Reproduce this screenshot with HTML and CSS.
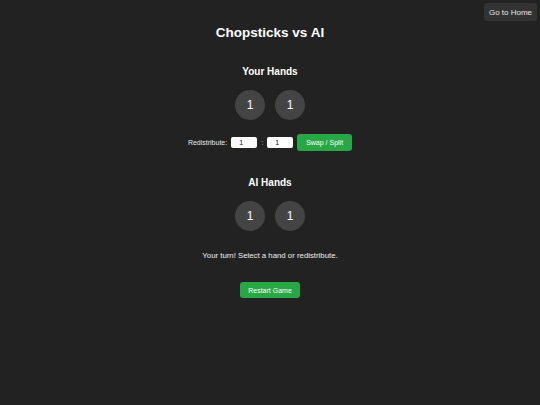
FILE: index.html
```html
<!DOCTYPE html>
<html lang="en">
<head>
<meta charset="utf-8">
<title>Chopsticks vs AI</title>
<link rel="stylesheet" href="styles.css">
</head>
<body>
<button class="home-btn">Go to Home</button>
<main class="game">
  <h1 class="title">Chopsticks vs AI</h1>
  <h2 class="section-title first">Your Hands</h2>
  <div class="hands">
    <div class="hand">1</div>
    <div class="hand">1</div>
  </div>
  <div class="redistribute">
    <span class="label">Redistribute:</span>
    <input class="num" type="text" value="1">
    <span class="colon">:</span>
    <input class="num" type="text" value="1">
    <button class="btn">Swap / Split</button>
  </div>
  <h2 class="section-title">AI Hands</h2>
  <div class="hands">
    <div class="hand">1</div>
    <div class="hand">1</div>
  </div>
  <p class="status">Your turn! Select a hand or redistribute.</p>
  <button class="btn restart">Restart Game</button>
</main>
</body>
</html>
```
FILE: styles.css
```css
html, body {
  margin: 0;
  padding: 0;
  background: #222222;
  color: #ffffff;
  font-family: "Liberation Sans", Arial, sans-serif;
}
body {
  width: 540px;
  height: 405px;
  position: relative;
  overflow: hidden;
}
.home-btn {
  position: absolute;
  top: 3px;
  right: 3px;
  width: 53px;
  height: 18px;
  padding: 0;
  border: none;
  border-radius: 3px;
  background: #333333;
  color: #e6e6e6;
  font-family: inherit;
  font-size: 8px;
}
.game {
  display: flex;
  flex-direction: column;
  align-items: center;
  padding-top: 25px;
}
.title {
  margin: 0;
  font-size: 13.5px;
  line-height: 16px;
  font-weight: bold;
}
.section-title {
  margin: 26px 0 0;
  font-size: 10px;
  line-height: 12px;
  font-weight: bold;
}
.section-title.first {
  margin-top: 25px;
}
.hands {
  display: flex;
  gap: 10px;
  margin-top: 13px;
}
.section-title + .hands {
  margin-top: 12px;
}
.hand {
  width: 30px;
  height: 30px;
  border-radius: 50%;
  background: #444444;
  display: flex;
  align-items: center;
  justify-content: center;
  font-size: 12px;
  color: #ffffff;
}
.redistribute {
  display: flex;
  align-items: center;
  gap: 4px;
  margin-top: 14px;
  height: 17px;
  font-size: 7px;
}
.label {
  color: #e8e8e8;
}
.num {
  box-sizing: border-box;
  width: 26px;
  height: 11px;
  margin: 0;
  padding: 0 0 0 8px;
  border: none;
  border-radius: 2px;
  background: #ffffff;
  color: #111111;
  font-family: inherit;
  font-size: 7px;
  outline: none;
}
.colon {
  color: #cccccc;
}
.btn {
  height: 17px;
  padding: 0 9px;
  border: none;
  border-radius: 3px;
  background: #28a745;
  color: #ffffff;
  font-family: inherit;
  font-size: 7px;
}
.status {
  margin: 20px 0 0;
  font-size: 7.8px;
  line-height: 9px;
  color: #f0f0f0;
}
.restart {
  margin-top: 22px;
  height: 16px;
  padding: 0 8px;
}
```
